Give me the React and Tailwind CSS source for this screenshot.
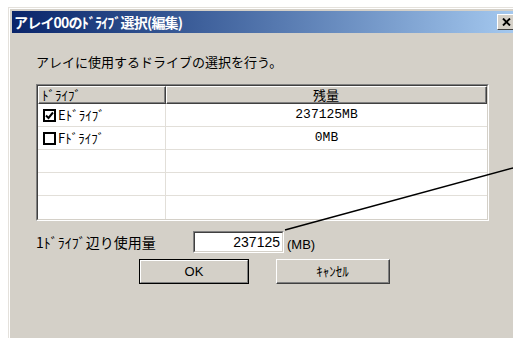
import React from 'react';

// Classic Win2000-style dialog: array drive selection (edit)
const rows = [
    { checked: true, name: 'Eﾄﾞﾗｲﾌﾞ', free: '237125MB' },
    { checked: false, name: 'Fﾄﾞﾗｲﾌﾞ', free: '0MB' },
    null,
    null,
    null,
];

const CheckBox = ({ checked }) => (
    <div className="w-[13px] h-[13px] border-2 border-black bg-white flex items-center justify-center">
        {checked && (
            <svg width="9" height="9" viewBox="0 0 9 9">
                <path d="M1 4.5 L3.5 7 L8 1.5" stroke="#000" strokeWidth="2" fill="none" />
            </svg>
        )}
    </div>
);

const HeaderCell = ({ className, children }) => (
    <div className={`h-full border-t border-l border-t-white border-l-white border-b border-r border-b-[#404040] border-r-[#404040] ${className}`}>
        <div className="h-full border-b border-r border-b-[#808080] border-r-[#808080] flex items-center">
            {children}
        </div>
    </div>
);

const App = () => {
    return (
        <div className="relative w-[513px] h-[338px] overflow-hidden bg-white pt-[7px] pl-[8px] font-['Noto_Sans_CJK_JP',sans-serif] text-black">
            <div className="w-[512px] h-[340px] bg-[#d4d0c8] border-t border-l border-[#e4e1dc]">
                <div className="h-full border-t border-l border-white p-[2px]">
                    {/* title bar */}
                    <div className="h-[22px] flex items-center justify-between bg-linear-to-r from-[#0a246a] to-[#a6caf0] pl-[2px] pr-[3px]">
                        <span className="text-white font-bold text-[14px] leading-[16px] tracking-[-0.8px]">アレイ00のﾄﾞﾗｲﾌﾞ選択(編集)</span>
                        <div className="w-[18px] h-[16px] bg-[#d4d0c8] border-t border-l border-white border-b border-r border-b-[#404040] border-r-[#404040] flex items-center justify-center">
                            <svg width="9" height="8" viewBox="0 0 9 8">
                                <path d="M1 0.5 L8 7.5 M8 0.5 L1 7.5" stroke="#000" strokeWidth="1.9" />
                            </svg>
                        </div>
                    </div>

                    <div className="pl-[24px]">
                        <p className="mt-[21px] text-[13px] leading-[16px]">アレイに使用するドライブの選択を行う。</p>

                        {/* drive list */}
                        <div className="mt-[14px] w-[453px] border border-t-[#808080] border-l-[#808080] border-b-white border-r-white">
                            <div className="border border-t-[#404040] border-l-[#404040] border-b-[#d4d0c8] border-r-[#d4d0c8] bg-white">
                                <div className="flex h-[18px] bg-[#d4d0c8] text-[13px] leading-[16px]">
                                    <HeaderCell className="w-[128px]">
                                        <span className="pl-[3px]">ﾄﾞﾗｲﾌﾞ</span>
                                    </HeaderCell>
                                    <HeaderCell className="flex-1">
                                        <span className="w-full text-center">残量</span>
                                    </HeaderCell>
                                </div>
                                {rows.map((r, i) => (
                                    <div key={i} className="flex h-[23px] border-b border-[#e2dfd9] last:border-b-0 text-[13px] leading-[16px]">
                                        <div className="w-[128px] border-r border-[#e2dfd9] flex items-center gap-[2px] pl-[5px]">
                                            {r && <CheckBox checked={r.checked} />}
                                            {r && <span>{r.name}</span>}
                                        </div>
                                        <div className="flex-1 flex items-center justify-center font-['Liberation_Mono',monospace] text-[13px]">
                                            {r && r.free}
                                        </div>
                                    </div>
                                ))}
                            </div>
                        </div>

                        {/* usage per drive */}
                        <div className="mt-[10px] flex items-center h-[22px]">
                            <span className="w-[157px] text-[14px] leading-[16px]">1ﾄﾞﾗｲﾌﾞ辺り使用量</span>
                            <div className="w-[91px] h-[22px] border border-t-[#808080] border-l-[#808080] border-b-white border-r-white">
                                <div className="h-full border border-t-[#404040] border-l-[#404040] border-b-[#d4d0c8] border-r-[#d4d0c8] bg-white flex items-center justify-end pr-[2px] font-['Liberation_Sans',sans-serif] text-[14px]">
                                    237125
                                </div>
                            </div>
                            <span className="ml-[3px] mt-[6px] font-['Liberation_Sans',sans-serif] text-[13px]">(MB)</span>
                        </div>

                        {/* buttons */}
                        <div className="mt-[6px] flex pl-[103px] text-[13px]">
                            <button className="w-[110px] h-[25px] border border-black bg-[#d4d0c8]">
                                <div className="h-full border border-t-white border-l-white border-b-[#808080] border-r-[#808080] flex items-center justify-center font-['Liberation_Sans',sans-serif]">
                                    OK
                                </div>
                            </button>
                            <button className="ml-[27px] w-[114px] h-[25px] border border-t-white border-l-white border-b-[#404040] border-r-[#404040] bg-[#d4d0c8]">
                                <div className="h-full border-b border-r border-b-[#808080] border-r-[#808080] flex items-center justify-center">
                                    ｷｬﾝｾﾙ
                                </div>
                            </button>
                        </div>
                    </div>
                </div>
            </div>

            {/* callout line */}
            <svg className="absolute top-0 left-0 pointer-events-none" width="513" height="338">
                <line x1="285" y1="230" x2="520" y2="166" stroke="#000" strokeWidth="1.5" />
            </svg>
        </div>
    );
};

export default App;
